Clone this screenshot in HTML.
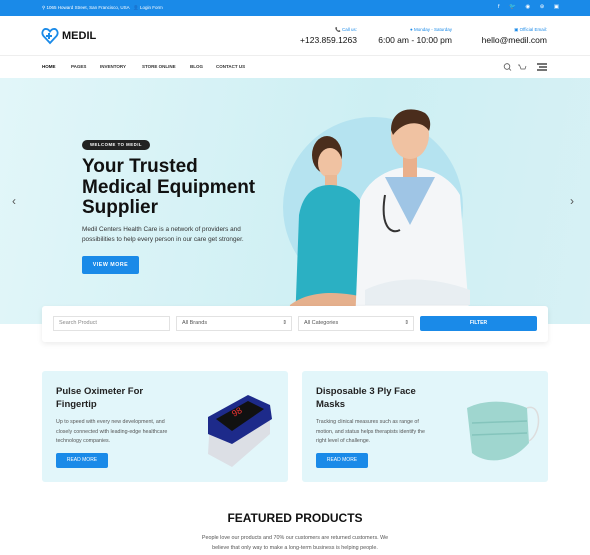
<!DOCTYPE html>
<html><head><style>
*{margin:0;padding:0;box-sizing:border-box}
body{width:590px;height:555px;overflow:hidden;font-family:"Liberation Sans",sans-serif;background:#fff;position:relative;color:#111}
.a{position:absolute}
.top{left:0;top:0;width:590px;height:16px;background:#1a8ae8;color:#fff;font-size:4.5px}
.nav{font-size:4.5px;font-weight:bold;color:#333}
.hero{left:0;top:78px;width:590px;height:246px;background:linear-gradient(100deg,#e2f6f9,#cdeff3 60%,#d7f1f5)}
.btn{background:#1a8ae8;color:#fff;font-weight:bold;text-align:center;border-radius:2px}
.card{background:#e2f6fa;border-radius:3px;width:246px;height:111px;top:371px}
.card h3{position:absolute;left:14px;top:14px;font-size:9.5px;font-weight:bold;line-height:13px;color:#222}
.card p{position:absolute;left:14px;top:47px;font-size:5.3px;line-height:9.7px;color:#555;width:120px}
.card .btn{position:absolute;left:14px;top:82px;width:52px;height:15px;font-size:5px;line-height:15px;font-weight:normal}
.inp{top:316px;height:15px;border:1px solid #e2e2e2;font-size:5.5px;color:#555;line-height:13px;padding-left:5px;background:#fff}
</style></head><body>
<div class="a top"><span class="a" style="left:42px;top:5px">⚲ 1065 Howard Street, San Francisco, USA &nbsp; 👤 Login Form</span><span class="a" style="left:498px;top:4px;font-size:5.5px;letter-spacing:4px">f 🐦 ◉ ⊛ ▣</span></div>
<svg class="a" style="left:41px;top:27px" width="18" height="18" viewBox="0 0 18 18"><path d="M9 16 L2.5 9 C0 6 2 1.5 5.5 2 C7 2.2 8 3 9 4.5 C10 3 11 2.2 12.5 2 C16 1.5 18 6 15.5 9 Z" fill="none" stroke="#1a8ae8" stroke-width="1.8"/><path d="M7 6h2v2h2v2H9v2H7v-2H5V8h2z" fill="#1a8ae8"/></svg>
<div class="a" style="left:62px;top:30px;font-size:11px;font-weight:bold">MEDIL</div>
<div class="a" style="left:300px;top:27px;width:57px;text-align:right;font-size:4.5px;color:#1a8ae8">📞 Call us:</div>
<div class="a" style="left:290px;top:35px;width:67px;text-align:right;font-size:8.5px">+123.859.1263</div>
<div class="a" style="left:372px;top:27px;width:80px;text-align:right;font-size:4.5px;color:#1a8ae8">● Monday - Saturday</div>
<div class="a" style="left:372px;top:35px;width:80px;text-align:right;font-size:8.5px">6:00 am - 10:00 pm</div>
<div class="a" style="left:470px;top:27px;width:77px;text-align:right;font-size:4.5px;color:#1a8ae8">▣ Official Email:</div>
<div class="a" style="left:470px;top:35px;width:77px;text-align:right;font-size:8.5px">hello@medil.com</div>
<div class="a" style="left:0;top:55px;width:590px;height:1px;background:#eee"></div>
<div class="a nav" style="left:42px;top:64px;color:#111">HOME</div>
<div class="a nav" style="left:71px;top:64px">PAGES</div>
<div class="a nav" style="left:100px;top:64px">INVENTORY</div>
<div class="a nav" style="left:142px;top:64px">STORE ONLINE</div>
<div class="a nav" style="left:190px;top:64px">BLOG</div>
<div class="a nav" style="left:216px;top:64px">CONTACT US</div>
<svg class="a" style="left:503px;top:62px" width="45" height="10"><circle cx="4" cy="4.5" r="2.8" fill="none" stroke="#555" stroke-width=".8"/><path d="M6 6.5l2 2" stroke="#555" stroke-width=".8"/><path d="M15 3h1.5l1.5 4h4l1-3" fill="none" stroke="#555" stroke-width=".7"/><path d="M34 2h10M36 5h8M34 8h10" stroke="#222" stroke-width="1.3"/></svg>
<div class="a hero"></div>
<div class="a" style="left:283px;top:117px;width:180px;height:180px;border-radius:50%;background:#b5e3f0"></div>
<!-- people -->
<svg class="a" style="left:285px;top:105px" width="215" height="220" viewBox="0 0 215 220">
<ellipse cx="42" cy="50" rx="15" ry="19" fill="#4a2d1c"/>
<ellipse cx="45" cy="58" rx="12" ry="15" fill="#f0c2a2"/>
<rect x="40" y="70" width="12" height="14" fill="#eab895"/>
<path d="M10 220 L14 110 C18 88 30 80 45 80 C60 80 72 88 78 100 L85 220Z" fill="#2bb0c3"/>
<path d="M5 200 C25 185 55 185 90 195 L95 220 L2 220Z" fill="#e5b08d"/>
<path d="M70 220 L75 95 C85 70 110 62 125 62 C145 62 165 72 175 90 L185 220Z" fill="#f4f6f8"/>
<path d="M100 72 L125 120 L150 72 Z" fill="#9fc5e5"/>
<rect x="118" y="48" width="14" height="24" fill="#eab08c"/>
<ellipse cx="125" cy="30" rx="19" ry="24" fill="#f0c2a2"/>
<path d="M106 25 C106 5 125 0 140 8 C146 13 146 20 144 26 C138 16 120 14 108 30Z" fill="#4a2d1c"/>
<path d="M80 185 C110 170 150 172 185 185 L185 200 L80 200Z" fill="#e8eef2"/>
<path d="M100 90 C95 120 105 130 115 125" fill="none" stroke="#333" stroke-width="2"/>
</svg>
<div class="a" style="left:82px;top:140px;width:68px;height:10px;border-radius:5px;background:#222;color:#fff;font-size:4.3px;font-weight:bold;letter-spacing:.5px;line-height:10px;text-align:center">WELCOME TO MEDIL</div>
<div class="a" style="left:82px;top:157px;font-size:19px;font-weight:bold;line-height:20.5px;color:#111">Your Trusted<br>Medical Equipment<br>Supplier</div>
<div class="a" style="left:82px;top:225px;font-size:6.4px;line-height:10px;color:#333">Medil Centers Health Care is a network of providers and<br>possibilities to help every person in our care get stronger.</div>
<div class="a btn" style="left:82px;top:256px;width:57px;height:18px;font-size:5.3px;line-height:18px;letter-spacing:.5px">VIEW MORE</div>
<div class="a" style="left:12px;top:194px;font-size:12px;color:#555">‹</div>
<div class="a" style="left:570px;top:194px;font-size:12px;color:#555">›</div>
<div class="a" style="left:42px;top:306px;width:506px;height:36px;background:#fff;border-radius:3px;box-shadow:0 2px 6px rgba(0,0,0,.08)"></div>
<div class="a inp" style="left:53px;width:117px;color:#888">Search Product</div>
<div class="a inp" style="left:176px;width:116px">All Brands<span style="position:absolute;right:4px">⇕</span></div>
<div class="a inp" style="left:298px;width:116px">All Categories<span style="position:absolute;right:4px">⇕</span></div>
<div class="a btn" style="left:420px;top:316px;width:117px;height:15px;font-size:5px;line-height:15px">FILTER</div>
<div class="a card" style="left:42px"><h3>Pulse Oximeter For<br>Fingertip</h3><p>Up to speed with every new development, and closely connected with leading-edge healthcare technology companies.</p><div class="btn">READ MORE</div>
<svg class="a" style="left:160px;top:18px" width="80" height="80"><path d="M8 30 L48 8 L68 18 L68 45 L30 78 L6 65Z" fill="#dcdfe5"/><path d="M6 28 L46 6 L68 16 L70 30 L30 55 L6 45Z" fill="#1d2a8a"/><path d="M14 30 L46 12 L62 20 L30 42Z" fill="#111"/><text x="32" y="28" fill="#e33" font-size="9" transform="rotate(-30 32 28)">98</text></svg></div>
<div class="a card" style="left:302px"><h3>Disposable 3 Ply Face<br>Masks</h3><p>Tracking clinical measures such as range of motion, and status helps therapists identify the right level of challenge.</p><div class="btn">READ MORE</div>
<svg class="a" style="left:155px;top:22px" width="85" height="75"><path d="M10 15 C30 5 55 8 70 15 L72 50 C55 70 30 72 15 60Z" fill="#9fd6cf"/><path d="M70 15 C85 10 85 40 72 48" fill="none" stroke="#ddd" stroke-width="1.5"/><path d="M15 30 L70 28 M15 42 L70 40" stroke="#84c4bc" stroke-width="1.5"/></svg></div>
<div class="a" style="left:0;top:511px;width:590px;text-align:center;font-size:12px;font-weight:bold;color:#111">FEATURED PRODUCTS</div>
<div class="a" style="left:0;top:533px;width:590px;text-align:center;font-size:5.4px;line-height:10px;color:#555">People love our products and 70% our customers are returned customers. We<br>believe that only way to make a long-term business is helping people.</div>
</body></html>
